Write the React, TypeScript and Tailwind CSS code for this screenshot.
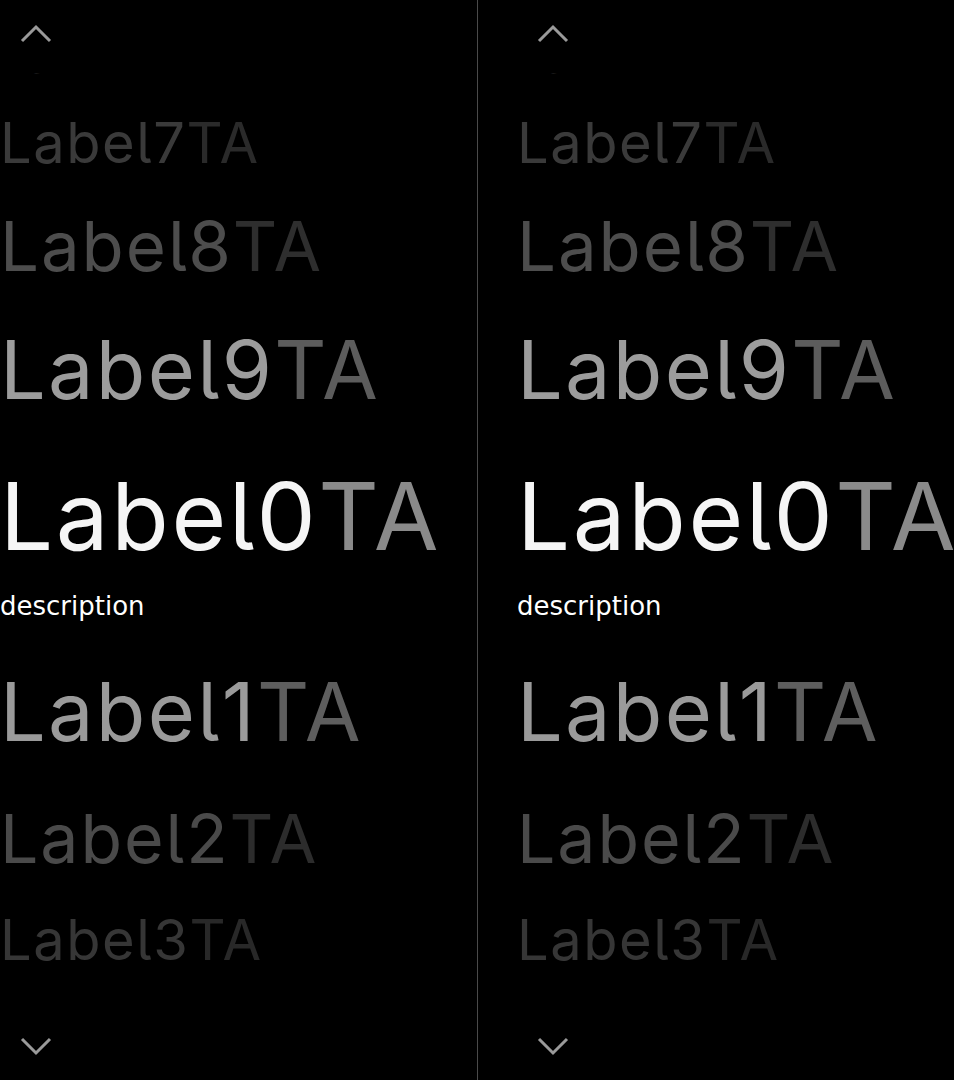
const rows = [
  { n: '6', size: 'text-[45px]', mt: 'mt-[-39px]', main: 'text-[#2a2a2a]', ta: 'text-[#1e1e1e]' },
  { n: '7', size: 'text-[56px]', mt: 'mt-[36px]', main: 'text-[#3a3a3a]', ta: 'text-[#2a2a2a]' },
  { n: '8', size: 'text-[69px]', mt: 'mt-[41px]', main: 'text-[#4d4d4d]', ta: 'text-[#2e2e2e]' },
  { n: '9', size: 'text-[81px]', mt: 'mt-[49px]', main: 'text-[#9c9c9c]', ta: 'text-[#5c5c5c]' },
  { n: '0', size: 'text-[94px]', mt: 'mt-[58px]', main: 'text-[#f5f5f5]', ta: 'text-[#8a8a8a]', desc: true },
  { n: '1', size: 'text-[81px]', mt: 'mt-[53px]', main: 'text-[#9a9a9a]', ta: 'text-[#5e5e5e]' },
  { n: '2', size: 'text-[68px]', mt: 'mt-[51px]', main: 'text-[#4a4a4a]', ta: 'text-[#2c2c2c]' },
  { n: '3', size: 'text-[56px]', mt: 'mt-[40px]', main: 'text-[#363636]', ta: 'text-[#282828]' },
  { n: '4', size: 'text-[45px]', mt: 'mt-[36px]', main: 'text-[#2a2a2a]', ta: 'text-[#1e1e1e]' },
];

function Chevron({ up }: { up?: boolean }) {
  return (
    <svg width="32" height="20" viewBox="0 0 32 20" fill="none">
      <path
        d={up ? 'M2 17 L16 3 L30 17' : 'M2 3 L16 17 L30 3'}
        stroke="#9a9a9a"
        strokeWidth="3"
      />
    </svg>
  );
}

function Picker({ width, pad }: { width: string; pad: string }) {
  return (
    <div className={`${width} shrink-0 h-[1080px] flex flex-col overflow-hidden ${pad}`}>
      <div className="h-[73px] shrink-0 pl-[20px] pt-[24px]">
        <Chevron up />
      </div>
      <div className="h-[934px] shrink-0 overflow-hidden flex flex-col">
        {rows.map(r => (
          <div key={r.n} className={`${r.mt} shrink-0`}>
            <div
              className={`${r.size} leading-none whitespace-nowrap tracking-[0.028em]`}
              style={{ fontFeatureSettings: '"cv05"' }}
            >
              <span className={r.main}>Label{r.n}</span>
              <span className={r.ta}>TA</span>
            </div>
            {r.desc && (
              <div className="mt-[30px] text-[26px] leading-none text-white font-['DejaVu_Sans',sans-serif]">
                description
              </div>
            )}
          </div>
        ))}
      </div>
      <div className="h-[73px] shrink-0 pl-[20px] pt-[29px]">
        <Chevron />
      </div>
    </div>
  );
}

export default function App() {
  return (
    <div className="w-[954px] h-[1080px] bg-black flex overflow-hidden font-['Inter',sans-serif]">
      <Picker width="w-[477px]" pad="pl-0" />
      <div className="w-px shrink-0 bg-[#4a4a4a]" />
      <Picker width="w-[476px]" pad="pl-[39px]" />
    </div>
  );
}
